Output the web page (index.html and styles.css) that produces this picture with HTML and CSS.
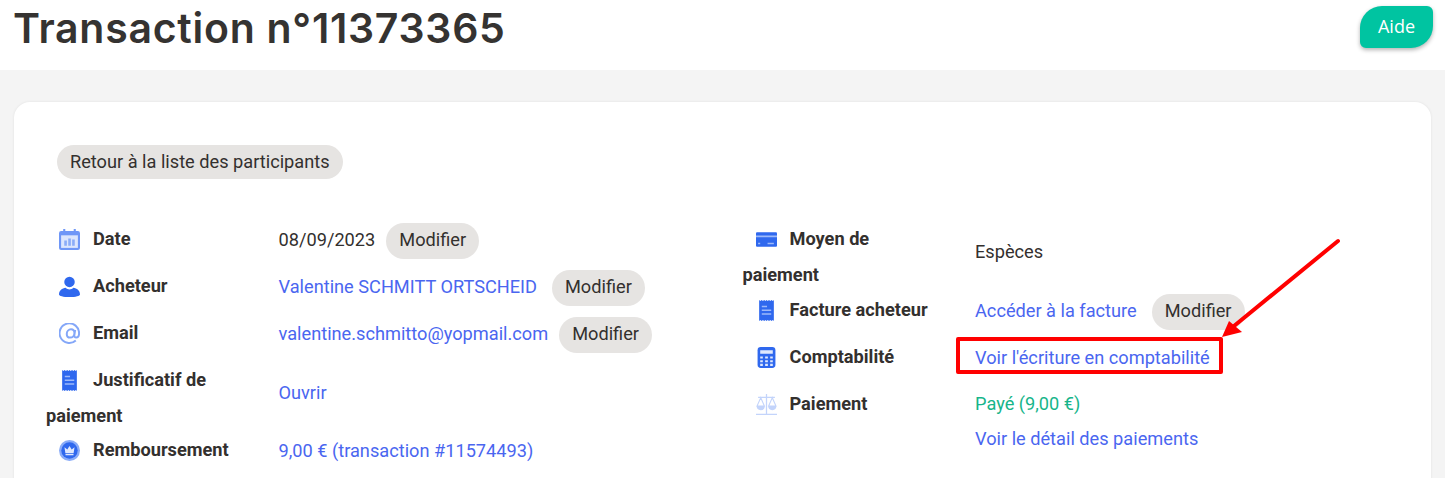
FILE: index.html
```html
<!DOCTYPE html>
<html lang="fr">
<head>
<meta charset="utf-8">
<title>Transaction n°11373365</title>
<link rel="stylesheet" href="styles.css">
</head>
<body>
<header class="topbar">
  <h1 class="title">Transaction n°11373365</h1>
  <a class="help" href="#">Aide</a>
</header>
<main class="page">
  <section class="card">
    <a class="pill back" href="#">Retour à la liste des participants</a>
    <div class="columns">
      <div class="details">
        <div class="label"><svg class="icon" viewBox="0 0 20 20"><path fill="#6f97f7" d="M4 0h2v2h8V0h2v2h2a2 2 0 0 1 2 2v14a2 2 0 0 1-2 2H2a2 2 0 0 1-2-2V4a2 2 0 0 1 2-2h2z"/><path fill="#dce6fd" d="M2 6h16v12H2z"/><path fill="#8aacf8" d="M5 11h2.500v5H5zm3.800-2h2.500v7H8.800zm3.700 1H15v6h-2.500z"/></svg>Date</div>
        <div class="value actions"><span class="sp">08/09/2023</span><a class="pill" href="#">Modifier</a></div>

        <div class="label"><svg class="icon" viewBox="0 0 20 20"><circle cx="10" cy="5.600" r="5" fill="#2f68ee"/><path fill="#2f68ee" d="M0 17.500c0-3.500 3-5.800 6.300-6.200 1 1 2.300 1.500 3.700 1.500s2.700-.5 3.700-1.500c3.300.4 6.300 2.700 6.300 6.200 0 1.300-4 2.500-10 2.500S0 18.800 0 17.500z"/></svg>Acheteur</div>
        <div class="value actions"><a class="link wide" href="#">Valentine SCHMITT ORTSCHEID</a><a class="pill" href="#">Modifier</a></div>

        <div class="label"><svg class="icon" viewBox="0 0 20 20"><path fill="none" stroke="#84a7f8" stroke-width="1.900" d="M16 16.600A9.300 9.300 0 1 1 19.100 10c0 2.200-1 3.800-2.700 3.800-1.300 0-2-.9-1.800-2.200l.8-5.100M14.700 9.500c0 2.600-1.800 4.400-4.100 4.400-2 0-3.200-1.400-3.200-3.500 0-2.600 1.900-4.400 4-4.400 2 0 3.300 1.400 3.300 3.500z"/></svg>Email</div>
        <div class="value actions"><a class="link sp" href="#">valentine.schmitto@yopmail.com</a><a class="pill" href="#">Modifier</a></div>

        <div class="label"><svg class="icon" viewBox="0 0 20 20"><path fill="#2f68ee" d="M3 0l1.200 1L5.400 0l1.200 1L7.800 0 9 1l1-1 1.200 1 1.200-1 1.200 1 1.200-1L16 1l1-1v20l-1-1-1.200 1-1.200-1-1.200 1-1.200-1-1.200 1L9 19l-1.200 1-1.200-1-1.200 1-1.200-1L3 20z"/><path fill="#9db9fa" d="M5.500 5.500h5v1.500h-5zm0 3.500h9v1.500h-9zm0 3.500h9V14h-9z"/></svg>Justificatif de paiement</div>
        <div class="value"><a class="link" href="#">Ouvrir</a></div>

        <div class="label"><svg class="icon" viewBox="0 0 20 20"><circle cx="10" cy="10" r="10" fill="#8aacf8"/><circle cx="10" cy="10" r="7.800" fill="#2f68ee"/><path fill="#dfe8fd" d="M5.200 7l2.700 2L10 5.800 12.100 9l2.700-2-.9 5.500H6.100zM6.200 13.300h7.600v1.300H6.200z"/></svg>Remboursement</div>
        <div class="value"><a class="link" href="#">9,00 € (transaction #11574493)</a></div>
      </div>

      <div class="details">
        <div class="label tall"><svg class="icon" viewBox="0 0 20 20"><path fill="#2f68ee" d="M1 3h18a1 1 0 0 1 1 1v12a1 1 0 0 1-1 1H1a1 1 0 0 1-1-1V4a1 1 0 0 1 1-1z"/><path fill="#9db9fa" d="M0 6.200h20v1.600H0zM2 13h2v1.500H2zm9 0h6v1.500h-6z"/></svg>Moyen de paiement</div>
        <div class="value"><span>Espèces</span></div>

        <div class="label"><svg class="icon" viewBox="0 0 20 20"><path fill="#2f68ee" d="M3 0l1.200 1L5.400 0l1.200 1L7.800 0 9 1l1-1 1.200 1 1.200-1 1.200 1 1.200-1L16 1l1-1v20l-1-1-1.200 1-1.200-1-1.200 1-1.200-1-1.200 1L9 19l-1.200 1-1.200-1-1.200 1-1.200-1L3 20z"/><path fill="#9db9fa" d="M5.500 5.500h5v1.500h-5zm0 3.500h9v1.500h-9zm0 3.500h9V14h-9z"/></svg>Facture acheteur</div>
        <div class="value actions"><a class="link wide" href="#">Accéder à la facture</a><a class="pill" href="#">Modifier</a></div>

        <div class="label"><svg class="icon" viewBox="0 0 20 20"><rect x="1.500" width="17" height="20" rx="3" fill="#2f68ee"/><path fill="#dfe8fd" d="M4 3h12v3.500H4zM4 9h2.500v2H4zm4.700 0h2.600v2H8.700zm4.800 0H16v2h-2.500zM4 12.500h2.500v2H4zm4.700 0h2.600v2H8.700zm4.800 0H16v2h-2.500zM4 16h2.500v2H4zm4.700 0h2.600v2H8.700zm4.800 0H16v2h-2.500z"/></svg>Comptabilité</div>
        <div class="value"><a class="link" href="#">Voir l'écriture en comptabilité</a></div>

        <div class="label"><svg class="icon" viewBox="0 0 20 20"><path fill="#c3d4fb" d="M0 18.800h20V20H0zM9.400 0h1.200v19H9.400zM2 2.500h16v1.200H2z"/><path fill="none" stroke="#c3d4fb" d="M4.500 3.500L1 11.500h7zM15.500 3.500L12 11.500h7z"/><path fill="#c3d4fb" d="M.6 11.500h7.800a3.900 3.900 0 0 1-7.800 0zm11 0h7.800a3.900 3.900 0 0 1-7.800 0z"/></svg>Paiement</div>
        <div class="value stack"><span class="paid">Payé (9,00 €)</span><a class="link" href="#">Voir le détail des paiements</a></div>
      </div>
    </div>
  </section>
</main>
<svg class="annotation" viewBox="0 0 1445 478" aria-hidden="true">
  <rect x="958" y="339" width="263" height="33" fill="none" stroke="#ff0000" stroke-width="4" stroke-linejoin="round"/>
  <path d="M1338 241L1234 326" fill="none" stroke="#ff0000" stroke-width="4" stroke-linecap="round"/>
  <path d="M1222 337L1229 321L1242 332z" fill="#ff0000"/>
</svg>
</body>
</html>
```
FILE: styles.css
```css
* { box-sizing: border-box; }
html, body { margin: 0; height: 478px; overflow: hidden; }
body {
  background: #f4f4f4;
  color: #33302e;
  font-family: Roboto, sans-serif;
  font-size: 18.200px;
  position: relative;
}
a { text-decoration: none; }

.topbar {
  height: 70px;
  background: #fff;
  display: flex;
  justify-content: space-between;
  align-items: flex-start;
  padding: 6px 12px 0 13px;
}
.title {
  margin: 0;
  font-family: Inter, sans-serif;
  font-size: 41px;
  font-weight: 600;
  letter-spacing: .73px;
  line-height: 44px;
  color: #353331;
}
.help {
  width: 73px;
  height: 42px;
  display: flex;
  align-items: center;
  justify-content: center;
  padding-bottom: 2px;
  background: #00c4a1;
  color: #fff;
  font-family: "Open Sans", sans-serif;
  font-size: 18px;
  border-radius: 22px 6px 22px 6px;
  box-shadow: 0 2px 4px rgba(0, 0, 0, .3);
}

.page { height: 408px; padding: 32px 14px 0; overflow: hidden; }
.card {
  background: #fff;
  border-radius: 16px;
  box-shadow: 0 0 3px rgba(0, 0, 0, .08);
  padding: 43px 32px 0;
  height: 400px;
}
.pill {
  display: inline-block;
  height: 36px;
  line-height: 34px;
  padding: 0 13px;
  border-radius: 18px;
  background: #e6e4e2;
  color: #33302e;
  white-space: nowrap;
}
.back { height: 34px; line-height: 33px; margin-left: 11px; }

.columns {
  display: grid;
  grid-template-columns: 696.500px 1fr;
  margin-top: 42px;
}
.details {
  display: grid;
  grid-template-columns: 232.500px 1fr;
  grid-auto-rows: min-content;
}
.label {
  font-weight: 700;
  line-height: 36px;
  min-height: 49px;
  margin-bottom: -2px;
  padding-right: 40px;
  color: #33302e;
}
.tall { margin-bottom: -1px; }
.icon {
  width: 21px;
  height: 21px;
  margin: 0 13px 0 13px;
  vertical-align: -5px;
}
.value {
  display: flex;
  align-items: baseline;
  align-self: center;
  padding-bottom: 9px;
  line-height: 34px;
}
.actions { padding-bottom: 7px; }
.sp { margin-right: 11px; }
.wide { margin-right: 15px; }
.link { color: #4a66f0; }
.paid { color: #17b58a; }
.stack { flex-direction: column; line-height: 35px; align-self: start; padding-bottom: 0; }

.annotation {
  position: absolute;
  left: 0;
  top: 0;
  width: 1445px;
  height: 478px;
  pointer-events: none;
}
```
